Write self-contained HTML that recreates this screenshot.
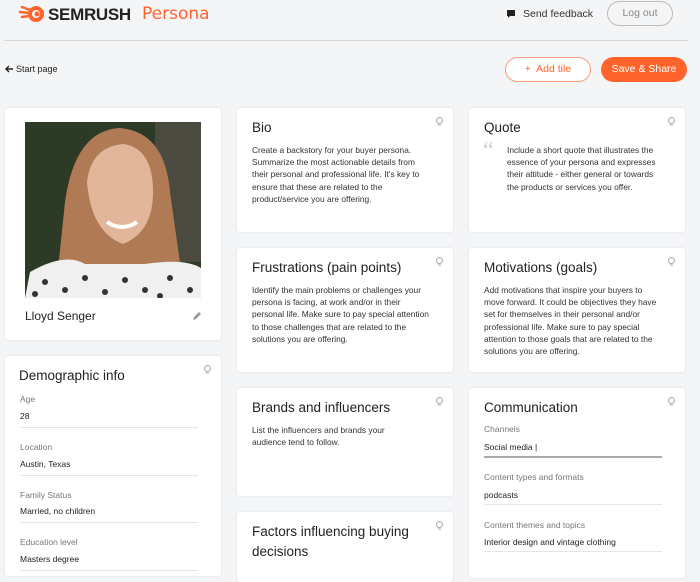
<!DOCTYPE html>
<html><head><meta charset="utf-8"><style>
*{margin:0;padding:0;box-sizing:border-box}
body{width:700px;height:568px;overflow:hidden;background:#f4f5f7;font-family:"Liberation Sans",sans-serif;color:#222;position:relative}
.abs{position:absolute}
.card{position:absolute;background:#fff;border-radius:3px;box-shadow:0 0 2px rgba(0,0,0,.12)}
.card h3{position:absolute;left:15px;top:10px;font-size:13.5px;font-weight:normal;color:#222;line-height:20px}
.card p{position:absolute;left:15px;top:36px;font-size:8.4px;line-height:12.2px;color:#333;width:180px}
.bulb{position:absolute;right:10px;top:9px;width:7px;height:10px}
.lbl{font-size:8.5px;color:#777;position:absolute;left:15px}
.val{font-size:8.5px;color:#222;position:absolute;left:15px}
.ln{position:absolute;left:15px;width:178px;height:1px;background:#e6e6e6}
</style></head><body>
<svg class="abs" style="left:18px;top:4px" width="28" height="20" viewBox="0 0 28 20"><path d="M4 3 L12 6 M2 8 L11 9 M4 13 L11 12" stroke="#ff642d" stroke-width="2.5" stroke-linecap="round"/><circle cx="18" cy="10" r="8" fill="#ff642d"/><circle cx="18" cy="10" r="4" fill="#fff"/><circle cx="19" cy="10" r="2.5" fill="#ff642d"/></svg>
<div class="abs" style="left:48px;top:5px;font-size:17px;font-weight:bold;letter-spacing:-0.3px">SEMRUSH</div>
<div class="abs" style="left:142px;top:4px;font-size:17px;color:#ff642d;font-family:'DejaVu Sans',sans-serif">Persona</div>
<svg class="abs" style="left:506px;top:9px" width="10" height="10"><path d="M1 1h8v6H4L2 9V7H1z" fill="#222"/></svg>
<div class="abs" style="left:523px;top:8px;font-size:10.5px;color:#333">Send feedback</div>
<div class="abs" style="left:607px;top:1px;width:66px;height:25px;border:1px solid #bbb;border-radius:13px;font-size:10.5px;color:#888;text-align:center;line-height:23px">Log out</div>
<div class="abs" style="left:4px;top:40px;width:684px;height:1px;background:#d8d8d8"></div>
<svg class="abs" style="left:4px;top:65px" width="10" height="8"><path d="M9 4H2M5 1L2 4l3 3" stroke="#222" stroke-width="1.4" fill="none"/></svg>
<div class="abs" style="left:16px;top:64px;font-size:9px;color:#222">Start page</div>
<div class="abs" style="left:505px;top:57px;width:86px;height:25px;border:1px solid #ff9b78;border-radius:13px;background:#fff;font-size:10.5px;color:#ff642d;text-align:center;line-height:23px">+&nbsp; Add tile</div>
<div class="abs" style="left:601px;top:57px;width:86px;height:25px;border-radius:13px;background:#ff642d;font-size:10.5px;color:#fff;text-align:center;line-height:25px">Save &amp; Share</div>

<div class="card" style="left:5px;top:108px;width:216px;height:232px">
<svg class="abs" style="left:20px;top:14px" width="176" height="176" viewBox="0 0 176 176">
<rect width="176" height="176" fill="#2c3a26"/>
<rect x="130" width="46" height="140" fill="#4a4a3e"/>
<path d="M30 176 L40 80 Q50 8 95 6 Q140 10 145 70 L160 176Z" fill="#b07a55"/>
<path d="M62 60 Q66 25 98 22 Q128 26 128 70 Q128 110 98 122 Q66 110 62 60Z" fill="#e2b69a"/>
<path d="M82 100 Q97 110 112 100" stroke="#fff" stroke-width="4" fill="none"/>
<path d="M0 176 L5 150 Q40 130 60 142 L120 142 Q160 136 176 146 L176 176Z" fill="#f0f0f0"/>
<g fill="#333"><circle cx="20" cy="160" r="3"/><circle cx="40" cy="168" r="3"/><circle cx="60" cy="156" r="3"/><circle cx="80" cy="170" r="3"/><circle cx="100" cy="158" r="3"/><circle cx="120" cy="168" r="3"/><circle cx="145" cy="156" r="3"/><circle cx="165" cy="168" r="3"/><circle cx="10" cy="172" r="3"/><circle cx="135" cy="174" r="3"/></g>
</svg>
<div class="abs" style="left:20px;top:201px;font-size:12px;color:#222">Lloyd Senger</div>
<svg class="abs" style="left:187px;top:203px" width="10" height="10"><path d="M1 9l1-3 5-5 2 2-5 5z" fill="#999"/></svg>
</div>

<div class="card" style="left:5px;top:356px;width:216px;height:220px">
<h3 style="top:10px;left:14px">Demographic info</h3>
<svg class="bulb" viewBox="0 0 7 10"><circle cx="3.5" cy="3.5" r="3" fill="none" stroke="#aaa"/><path d="M2 8h3" stroke="#aaa"/></svg>
<div class="lbl" style="top:38px">Age</div><div class="val" style="top:55px">28</div><div class="ln" style="top:71px"></div>
<div class="lbl" style="top:86px">Location</div><div class="val" style="top:103px">Austin, Texas</div><div class="ln" style="top:119px"></div>
<div class="lbl" style="top:134px">Family Status</div><div class="val" style="top:150px">Married, no children</div><div class="ln" style="top:166px"></div>
<div class="lbl" style="top:181px">Education level</div><div class="val" style="top:198px">Masters degree</div><div class="ln" style="top:214px"></div>
</div>

<div class="card" style="left:237px;top:108px;width:216px;height:124px"><h3>Bio</h3><svg class="bulb" viewBox="0 0 7 10"><circle cx="3.5" cy="3.5" r="3" fill="none" stroke="#aaa"/><path d="M2 8h3" stroke="#aaa"/></svg>
<p>Create a backstory for your buyer persona. Summarize the most actionable details from their personal and professional life. It's key to ensure that these are related to the product/service you are offering.</p></div>

<div class="card" style="left:469px;top:108px;width:216px;height:124px"><h3>Quote</h3><svg class="bulb" viewBox="0 0 7 10"><circle cx="3.5" cy="3.5" r="3" fill="none" stroke="#aaa"/><path d="M2 8h3" stroke="#aaa"/></svg>
<div class="abs" style="left:14px;top:30px;font-size:24px;color:#ccc;font-family:'Liberation Serif',serif">“</div>
<p style="left:38px;width:160px">Include a short quote that illustrates the essence of your persona and expresses their attitude - either general or towards the products or services you offer.</p></div>

<div class="card" style="left:237px;top:248px;width:216px;height:124px"><h3>Frustrations (pain points)</h3><svg class="bulb" viewBox="0 0 7 10"><circle cx="3.5" cy="3.5" r="3" fill="none" stroke="#aaa"/><path d="M2 8h3" stroke="#aaa"/></svg>
<p>Identify the main problems or challenges your persona is facing, at work and/or in their personal life. Make sure to pay special attention to those challenges that are related to the solutions you are offering.</p></div>

<div class="card" style="left:469px;top:248px;width:216px;height:124px"><h3>Motivations (goals)</h3><svg class="bulb" viewBox="0 0 7 10"><circle cx="3.5" cy="3.5" r="3" fill="none" stroke="#aaa"/><path d="M2 8h3" stroke="#aaa"/></svg>
<p>Add motivations that inspire your buyers to move forward. It could be objectives they have set for themselves in their personal and/or professional life. Make sure to pay special attention to those goals that are related to the solutions you are offering.</p></div>

<div class="card" style="left:237px;top:388px;width:216px;height:108px"><h3>Brands and influencers</h3><svg class="bulb" viewBox="0 0 7 10"><circle cx="3.5" cy="3.5" r="3" fill="none" stroke="#aaa"/><path d="M2 8h3" stroke="#aaa"/></svg>
<p style="width:150px">List the influencers and brands your audience tend to follow.</p></div>

<div class="card" style="left:237px;top:512px;width:216px;height:70px"><h3 style="line-height:20px;width:180px">Factors influencing buying decisions</h3><svg class="bulb" viewBox="0 0 7 10"><circle cx="3.5" cy="3.5" r="3" fill="none" stroke="#aaa"/><path d="M2 8h3" stroke="#aaa"/></svg></div>

<div class="card" style="left:469px;top:388px;width:216px;height:190px"><h3>Communication</h3><svg class="bulb" viewBox="0 0 7 10"><circle cx="3.5" cy="3.5" r="3" fill="none" stroke="#aaa"/><path d="M2 8h3" stroke="#aaa"/></svg>
<div class="lbl" style="top:36px">Channels</div><div class="val" style="top:54px">Social media |</div><div class="ln" style="top:68px;height:2px;background:#aaa"></div>
<div class="lbl" style="top:84px">Content types and formats</div><div class="val" style="top:102px">podcasts</div><div class="ln" style="top:116px"></div>
<div class="lbl" style="top:132px">Content themes and topics</div><div class="val" style="top:149px">Interior design and vintage clothing</div><div class="ln" style="top:163px"></div>
</div>
</body></html>
